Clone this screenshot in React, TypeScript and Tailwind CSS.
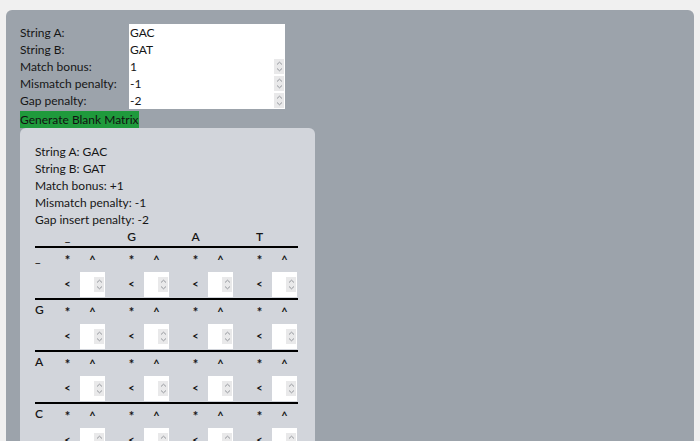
import React from 'react';

const font = { fontFamily: 'Lato, "Noto Sans", sans-serif' };

function Spinner() {
  return (
    <div className="flex h-[15px] w-[10px] items-center justify-center bg-[#e9e9ea]">
      <svg width="7" height="11" viewBox="0 0 7 11" fill="none" stroke="#8a8d93" strokeWidth="0.9">
        <path d="M1 3.5 L3.5 1.2 L6 3.5" />
        <path d="M1 7.5 L3.5 9.8 L6 7.5" />
      </svg>
    </div>
  );
}

function FieldRow({ label, value, number }: { label: string; value: string; number?: boolean }) {
  return (
    <div className="flex h-[17px] items-center">
      <div className="w-[109px]">{label}</div>
      <div className="flex h-[17px] w-[156px] items-center justify-between bg-white pl-px pr-px">
        <span>{value}</span>
        {number && <Spinner />}
      </div>
    </div>
  );
}

function CellInput() {
  return (
    <div className="flex h-[25px] w-[25px] items-center justify-end bg-white pr-[1px]">
      <Spinner />
    </div>
  );
}

function MatrixCell({ last }: { last?: boolean }) {
  return (
    <div className={last ? 'w-[50px]' : 'w-[64px]'}>
      <div className="flex h-[24px] items-center text-[11px] font-bold">
        <div className="w-[25px] pt-[2px] text-center text-[13px]">*</div>
        <div className="w-[25px] text-center">^</div>
      </div>
      <div className="flex h-[26px] items-start text-[11px] font-bold">
        <div className="flex h-[25px] w-[25px] items-center justify-center">&lt;</div>
        <CellInput />
      </div>
    </div>
  );
}

function MatrixRow({ label }: { label: string }) {
  return (
    <div className="flex border-b-2 border-black">
      <div className="w-[20px] pt-[1px] font-semibold">{label}</div>
      {[0, 1, 2, 3].map((i) => (
        <MatrixCell key={i} last={i === 3} />
      ))}
    </div>
  );
}

export default function App() {
  const cols = ['_', 'G', 'A', 'T'];
  const rows = ['_', 'G', 'A', 'C'];
  return (
    <div className="min-h-[441px] bg-[#f0f0f0] px-[6px] pt-[10px] text-[12px] text-[#161616]" style={font}>
      <div className="h-[431px] overflow-hidden rounded-t-[6px] bg-[#9ca3ab] p-[14px]">
        <FieldRow label="String A:" value="GAC" />
        <FieldRow label="String B:" value="GAT" />
        <FieldRow label="Match bonus:" value="1" number />
        <FieldRow label="Mismatch penalty:" value="-1" number />
        <FieldRow label="Gap penalty:" value="-2" number />
        <button className="mt-[2px] block h-[17px] bg-[#1f9a3c] px-0 leading-[17px] text-[#111]">
          Generate Blank Matrix
        </button>
        <div className="w-[295px] rounded-[6px] bg-[#d2d5db] px-[15px] pt-[15px] pb-[20px]">
          <div className="leading-[17px]">
            <div>String A: GAC</div>
            <div>String B: GAT</div>
            <div>Match bonus: +1</div>
            <div>Mismatch penalty: -1</div>
            <div>Gap insert penalty: -2</div>
          </div>
          <div className="w-[263px]">
            <div className="flex h-[20px] items-center border-b-2 border-black font-semibold">
              <div className="w-[20px]" />
              {cols.map((c, i) => (
                <div key={i} className={i === 3 ? 'w-[50px]' : 'w-[64px]'}>
                  <div className="w-[25px] text-center">{c}</div>
                </div>
              ))}
            </div>
            {rows.map((r, i) => (
              <MatrixRow key={i} label={r} />
            ))}
          </div>
        </div>
      </div>
    </div>
  );
}
